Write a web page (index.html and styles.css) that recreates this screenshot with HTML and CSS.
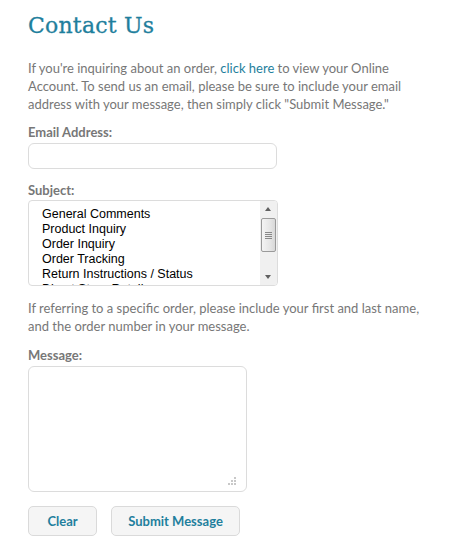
FILE: index.html
```html
<!DOCTYPE html>
<html>
<head>
<meta charset="utf-8">
<link rel="stylesheet" href="styles.css">
</head>
<body>
<div class="page">
  <h1 class="title">Contact Us</h1>
  <p class="intro">If you're inquiring about an order, <a class="link" href="#">click here</a> to view your Online Account. To send us an email, please be sure to include your email address with your message, then simply click "Submit Message."</p>

  <label class="label label-email">Email Address:</label>
  <div class="input"></div>

  <label class="label label-subject">Subject:</label>
  <div class="listbox">
    <ul class="options">
      <li>General Comments</li>
      <li>Product Inquiry</li>
      <li>Order Inquiry</li>
      <li>Order Tracking</li>
      <li>Return Instructions / Status</li>
      <li>Direct Store Retail</li>
    </ul>
    <div class="scrollbar">
      <div class="arrow arrow-up"></div>
      <div class="thumb"><span></span><span></span><span></span><span></span></div>
      <div class="track"></div>
      <div class="arrow arrow-down"></div>
    </div>
  </div>

  <p class="note">If referring to a specific order, please include your first and last name, and the order number in your message.</p>

  <label class="label label-message">Message:</label>
  <div class="textarea">
    <svg class="grip" width="10" height="10" viewBox="0 0 10 10">
      <rect x="7" y="1" width="2" height="2" fill="#c8c8c8"/>
      <rect x="4" y="4" width="2" height="2" fill="#c8c8c8"/>
      <rect x="7" y="4" width="2" height="2" fill="#c8c8c8"/>
      <rect x="1" y="7" width="2" height="2" fill="#c8c8c8"/>
      <rect x="4" y="7" width="2" height="2" fill="#c8c8c8"/>
      <rect x="7" y="7" width="2" height="2" fill="#c8c8c8"/>
    </svg>
  </div>

  <div class="buttons">
    <button class="btn btn-clear">Clear</button>
    <button class="btn btn-submit">Submit Message</button>
  </div>
</div>
</body>
</html>
```

FILE: styles.css
```css
html, body {
  margin: 0;
  padding: 0;
  background: #fff;
}
.page {
  padding: 0 28px;
  font-family: Lato, "Liberation Sans", sans-serif;
  color: #777;
  font-size: 13px;
}
.title {
  margin: 0;
  padding-top: 10px;
  font-family: "DejaVu Serif", serif;
  font-weight: normal;
  font-size: 22px;
  line-height: 32px;
  color: #1f7f9d;
  letter-spacing: 0.2px;
  -webkit-text-stroke: 0.3px #1f7f9d;
}
.intro {
  margin: 17px 0 0;
  line-height: 18px;
  width: 390px;
}
.link {
  color: #1f7f9d;
  text-decoration: none;
}
.label {
  display: block;
  font-weight: bold;
  line-height: 18px;
  color: #777;
}
.label-email { margin-top: 10px; }
.label-subject { margin-top: 12px; }
.label-message { margin-top: 11px; }
.input {
  margin-top: 2px;
  width: 247px;
  height: 24px;
  border: 1px solid #dcdcdc;
  border-radius: 6px;
}
.listbox {
  margin-top: 1px;
  width: 248px;
  height: 84px;
  border: 1px solid #dcdcdc;
  border-radius: 4px;
  display: flex;
  overflow: hidden;
}
.options {
  flex: 1;
  margin: 0;
  padding: 6px 0 0 13px;
  list-style: none;
  font-family: "Liberation Sans", Arial, sans-serif;
  font-size: 12.5px;
  line-height: 15px;
  color: #000;
  overflow: hidden;
}
.scrollbar {
  width: 17px;
  display: flex;
  flex-direction: column;
  background: #f0f0f0;
}
.arrow {
  height: 17px;
  position: relative;
}
.arrow::after {
  content: "";
  position: absolute;
  left: 5px;
  border-left: 3.5px solid transparent;
  border-right: 3.5px solid transparent;
}
.arrow-up::after {
  top: 6px;
  border-bottom: 4px solid #606060;
}
.arrow-down::after {
  top: 7px;
  border-top: 4px solid #606060;
}
.thumb {
  height: 34px;
  margin: 0 1px;
  border: 1px solid #9a9a9a;
  border-radius: 2px;
  background: linear-gradient(to right, #f4f4f4, #e6e6e6 60%, #d8d8d8);
  box-sizing: border-box;
  display: flex;
  flex-direction: column;
  align-items: center;
  justify-content: center;
  gap: 1px;
}
.thumb span {
  display: block;
  width: 7px;
  height: 1px;
  background: #888;
}
.track { flex: 1; }
.note {
  margin: 13px 0 0;
  line-height: 18px;
}
.textarea {
  position: relative;
  margin-top: 2px;
  width: 217px;
  height: 124px;
  border: 1px solid #dcdcdc;
  border-radius: 6px;
}
.grip {
  position: absolute;
  right: 9px;
  bottom: 5px;
}
.buttons {
  display: flex;
  gap: 14px;
  margin-top: 14px;
}
.btn {
  height: 30px;
  padding: 0;
  white-space: nowrap;
  background: #f5f5f5;
  border: 1px solid #dadada;
  border-radius: 5px;
  font-family: Lato, "Liberation Sans", sans-serif;
  font-weight: bold;
  font-size: 13px;
  color: #1f7f9d;
}
.btn-clear { width: 69px; }
.btn-submit { width: 129px; }
```
